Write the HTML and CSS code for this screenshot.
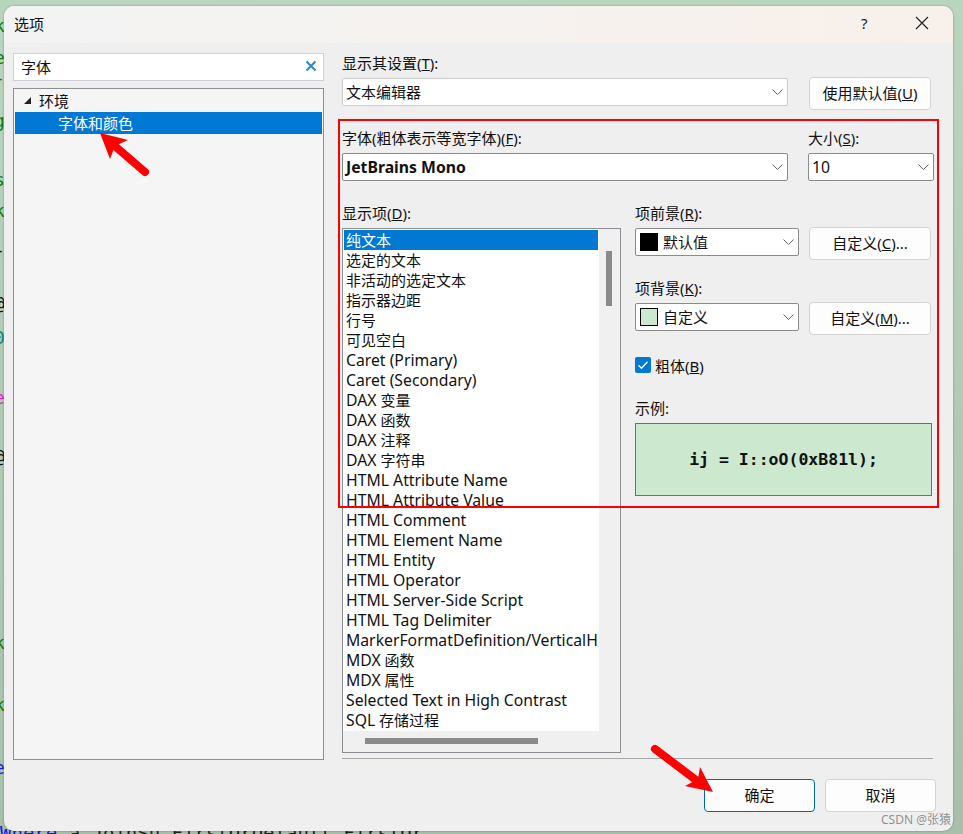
FILE: index.html
```html
<!DOCTYPE html>
<html lang="zh-CN">
<head>
    <meta charset="UTF-8">
    <title>选项</title>
    <link rel="stylesheet" href="styles.css">
</head>
<body>
    <!-- Editor text showing around the dialog -->
    <div class="code-behind">
        <span class="code-frag green" style="top:15px">k</span>
        <span class="code-frag green" style="top:47px">e</span>
        <span class="code-frag green" style="top:67px">-</span>
        <span class="code-frag green" style="top:110px">g</span>
        <span class="code-frag green" style="top:169px">s</span>
        <span class="code-frag green" style="top:200px">k</span>
        <span class="code-frag" style="top:239px">-</span>
        <span class="code-frag" style="top:292px">@</span>
        <span class="code-frag teal" style="top:327px">0</span>
        <span class="code-frag pink" style="top:387px">e</span>
        <span class="code-frag" style="top:445px">@</span>
        <span class="code-frag green" style="top:632px">k</span>
        <span class="code-frag green" style="top:694px">k</span>
        <span class="code-frag blue" style="top:757px">e</span>
        <div class="code-bottom"><span class="blue">Where</span> a.JoinSu.FirstOrDefault.FirstOr</div>
    </div>

    <div class="dialog">
        <div class="titlebar">
            <span class="title">选项</span>
            <span class="help">?</span>
            <svg class="close" width="14" height="14" viewBox="0 0 14 14"><path d="M1 1l12 12M13 1L1 13" stroke="#222" stroke-width="1.2" fill="none"/></svg>
        </div>

        <div class="content">
            <div class="left">
                <div class="search">
                    <span>字体</span>
                    <svg width="12" height="12" viewBox="0 0 12 12"><path d="M1.5 1.5l9 9M10.5 1.5l-9 9" stroke="#2b86cf" stroke-width="2" fill="none"/></svg>
                </div>
                <div class="tree">
                    <div class="tree-row">
                        <svg class="tree-arrow" width="9" height="9" viewBox="0 0 9 9"><path d="M8 1v7H1z" fill="#222"/></svg>
                        <span>环境</span>
                    </div>
                    <div class="tree-row child">字体和颜色</div>
                </div>
            </div>

            <div class="right">
                <div class="label">显示其设置(<u>T</u>):</div>
                <div class="row">
                    <div class="select soft wide">
                        <span>文本编辑器</span>
                        <svg class="chev" width="11" height="6" viewBox="0 0 11 6"><path d="M.5.5l5 5 5-5" stroke="#666" fill="none"/></svg>
                    </div>
                    <div class="btn">使用默认值(<u>U</u>)</div>
                </div>

                <div class="font-row">
                    <div>
                        <div class="label">字体(粗体表示等宽字体)(<u>F</u>):</div>
                        <div class="select wide">
                            <b class="lat">JetBrains Mono</b>
                            <svg class="chev" width="11" height="6" viewBox="0 0 11 6"><path d="M.5.5l5 5 5-5" stroke="#666" fill="none"/></svg>
                        </div>
                    </div>
                    <div>
                        <div class="label">大小(<u>S</u>):</div>
                        <div class="select size">
                            <span class="lat">10</span>
                            <svg class="chev" width="11" height="6" viewBox="0 0 11 6"><path d="M.5.5l5 5 5-5" stroke="#666" fill="none"/></svg>
                        </div>
                    </div>
                </div>

                <div class="items-row">
                    <div class="items-col">
                        <div class="label">显示项(<u>D</u>):</div>
                        <div class="listbox">
                            <div class="list-inner">
                                <div class="item selected">纯文本</div>
                                <div class="item">选定的文本</div>
                                <div class="item">非活动的选定文本</div>
                                <div class="item">指示器边距</div>
                                <div class="item">行号</div>
                                <div class="item">可见空白</div>
                                <div class="item"><span class="lat">Caret (Primary)</span></div>
                                <div class="item"><span class="lat">Caret (Secondary)</span></div>
                                <div class="item"><span class="lat">DAX</span> 变量</div>
                                <div class="item"><span class="lat">DAX</span> 函数</div>
                                <div class="item"><span class="lat">DAX</span> 注释</div>
                                <div class="item"><span class="lat">DAX</span> 字符串</div>
                                <div class="item"><span class="lat">HTML Attribute Name</span></div>
                                <div class="item"><span class="lat">HTML Attribute Value</span></div>
                                <div class="item"><span class="lat">HTML Comment</span></div>
                                <div class="item"><span class="lat">HTML Element Name</span></div>
                                <div class="item"><span class="lat">HTML Entity</span></div>
                                <div class="item"><span class="lat">HTML Operator</span></div>
                                <div class="item"><span class="lat">HTML Server-Side Script</span></div>
                                <div class="item"><span class="lat">HTML Tag Delimiter</span></div>
                                <div class="item"><span class="lat">MarkerFormatDefinition/VerticalHighlight</span></div>
                                <div class="item"><span class="lat">MDX</span> 函数</div>
                                <div class="item"><span class="lat">MDX</span> 属性</div>
                                <div class="item"><span class="lat">Selected Text in High Contrast</span></div>
                                <div class="item"><span class="lat">SQL</span> 存储过程</div>
                            </div>
                            <div class="vthumb"></div>
                            <div class="hthumb"></div>
                        </div>
                    </div>

                    <div class="props-col">
                        <div class="label">项前景(<u>R</u>):</div>
                        <div class="row">
                            <div class="select color">
                                <i class="swatch black"></i><span>默认值</span>
                                <svg class="chev" width="11" height="6" viewBox="0 0 11 6"><path d="M.5.5l5 5 5-5" stroke="#666" fill="none"/></svg>
                            </div>
                            <div class="btn">自定义(<u>C</u>)...</div>
                        </div>
                        <div class="label second">项背景(<u>K</u>):</div>
                        <div class="row">
                            <div class="select color">
                                <i class="swatch green-sw"></i><span>自定义</span>
                                <svg class="chev" width="11" height="6" viewBox="0 0 11 6"><path d="M.5.5l5 5 5-5" stroke="#666" fill="none"/></svg>
                            </div>
                            <div class="btn">自定义(<u>M</u>)...</div>
                        </div>
                        <div class="check-row">
                            <span class="check"><svg width="16" height="16" viewBox="0 0 16 16"><path d="M3.5 8.2l3 3 6-6.4" stroke="#fff" stroke-width="1.4" fill="none"/></svg></span>
                            <span>粗体(<u>B</u>)</span>
                        </div>
                        <div class="label sample-label">示例:</div>
                        <div class="sample">ij = I::oO(0xB81l);</div>
                    </div>
                </div>
            </div>
        </div>

        <div class="footer">
            <div class="footer-btns">
                <div class="btn footer-btn primary">确定</div>
                <div class="btn footer-btn">取消</div>
            </div>
        </div>
    </div>

    <!-- Annotations drawn over the screenshot -->
    <div class="red-box"></div>
    <svg class="marks" width="963" height="834" viewBox="0 0 963 834">
        <path d="M145 172L116 147" stroke="#fe0000" stroke-width="8" stroke-linecap="round"/>
        <path d="M100 133L128 140L115 146L110 159Z" fill="#fe0000"/>
        <path d="M655 749L696 780" stroke="#fe0000" stroke-width="8" stroke-linecap="round"/>
        <path d="M713 792L700 767L698 779L685 786Z" fill="#fe0000"/>
    </svg>
    <div class="watermark">CSDN @张猿</div>
</body>
</html>
```

FILE: styles.css
```css
* {
    margin: 0;
    padding: 0;
    box-sizing: border-box;
}

body {
    width: 963px;
    height: 834px;
    position: relative;
    overflow: hidden;
    padding: 6px 10px 3px 4px;
    background: linear-gradient(180deg, #bad5be 0%, #b4ccb6 40%, #a9bfaa 100%);
    font-family: "Noto Sans", "Noto Sans CJK SC", sans-serif;
    font-size: 15px;
    color: #111;
}

/* Latin runs are a bit wider than the CJK ones */
.lat {
    font-size: 15.75px;
}

/* Editor behind the dialog */
.code-behind {
    position: absolute;
    inset: 0;
    font-family: "DejaVu Sans Mono", monospace;
    font-size: 18px;
}

.code-frag {
    position: absolute;
    left: -6px;
}

.green { color: #0a7d0a; }
.teal { color: #0b8a7a; }
.pink { color: #e020e0; }
.blue { color: #1a1ae0; }

.code-bottom {
    position: absolute;
    left: 0;
    top: 822px;
    white-space: pre;
    color: #222;
    font-size: 19px;
}

/* Dialog */
.dialog {
    position: relative;
    height: 825px;
    background: #efefef;
    border-radius: 10px;
    overflow: hidden;
    box-shadow: 0 0 2px rgba(60, 70, 60, 0.6);
}

.titlebar {
    height: 37px;
    display: flex;
    align-items: center;
    padding: 0 0 3px 10px;
    background: linear-gradient(90deg, #f3f3f3, #f8f0ea);
}

.title {
    flex: 1;
}

.help {
    width: 14px;
    margin-right: 40px;
    font-size: 15px;
    color: #222;
}

.close {
    margin-right: 24px;
}

.content {
    display: flex;
    padding: 10px 0 0 9px;
    gap: 18px;
}

/* Left column */
.left {
    width: 311px;
}

.search {
    height: 28px;
    background: #fff;
    border: 1px solid #cfcfdc;
    display: flex;
    align-items: center;
    justify-content: space-between;
    padding: 0 6px 2px 7px;
}

.tree {
    height: 672px;
    margin-top: 7px;
    background: #f5f5f5;
    border: 1px solid #8d8d94;
    padding: 1px;
}

.tree-row {
    height: 22px;
    display: flex;
    align-items: center;
    padding: 0 0 2px 8px;
}

.tree-arrow {
    margin-right: 7px;
}

.tree-row.child {
    padding-left: 43px;
    background: #0078d4;
    color: #fff;
}

/* Right column */
.right {
    width: 594px;
}

.label {
    height: 24px;
    line-height: 20px;
    white-space: nowrap;
}

.row {
    display: flex;
    align-items: flex-start;
}

.select {
    height: 28px;
    margin-top: 1px;
    background: #fff;
    border: 1px solid #8b8b8b;
    border-radius: 2px;
    display: flex;
    align-items: center;
    padding: 0 0 1px 3px;
    position: relative;
    white-space: nowrap;
}

.select.soft {
    border-color: #cdcdcd;
}

.select.wide {
    width: 446px;
}

.select.size {
    width: 126px;
}

.select.color {
    width: 164px;
    padding-left: 4px;
}

.chev {
    position: absolute;
    right: 4px;
    top: 10px;
}

.btn {
    width: 122px;
    height: 33px;
    margin-left: 21px;
    padding-bottom: 2px;
    background: #fdfdfd;
    border: 1px solid #d3d3d3;
    border-radius: 4px;
    display: flex;
    align-items: center;
    justify-content: center;
    white-space: nowrap;
}

.props-col .btn {
    margin-left: 10px;
}

.font-row {
    display: flex;
    gap: 20px;
    margin-top: 18px;
}

.font-row b {
    font-weight: 700;
}

.items-row {
    display: flex;
    margin-top: 22px;
}

.items-col {
    width: 293px;
}

/* List box */
.listbox {
    position: relative;
    width: 279px;
    height: 525px;
    margin-top: 1px;
    border: 1px solid #8d8d94;
    background: #f0f0f0;
    overflow: hidden;
}

.list-inner {
    width: 256px;
    height: 502px;
    background: #fff;
    padding: 1px;
    overflow: hidden;
}

.item {
    height: 20px;
    line-height: 20px;
    padding-left: 2px;
    white-space: nowrap;
    width: 254px;
    overflow: hidden;
}

.item.selected {
    background: #0078d4;
    color: #fff;
}

.vthumb {
    position: absolute;
    left: 263px;
    top: 22px;
    width: 6px;
    height: 55px;
    background: #8a8a8a;
}

.hthumb {
    position: absolute;
    left: 22px;
    top: 509px;
    width: 173px;
    height: 6px;
    background: #8a8a8a;
}

/* Colour options */
.props-col {
    width: 297px;
}

.second {
    margin-top: 18px;
}

.swatch {
    width: 18px;
    height: 18px;
    margin: 0 5px 0 0;
    border: 1px solid #000;
}

.swatch.black {
    background: #000;
}

.swatch.green-sw {
    background: #cce8cf;
}

.check-row {
    display: flex;
    align-items: center;
    gap: 4px;
    margin-top: 19px;
    height: 22px;
}

.check {
    width: 16px;
    height: 16px;
    background: #0078d4;
    border-radius: 2px;
    display: block;
}

.sample-label {
    margin-top: 22px;
}

.sample {
    height: 73px;
    margin-top: 1px;
    padding-bottom: 1px;
    background: #cce8cf;
    border: 1px solid #6f6f6f;
    display: flex;
    align-items: center;
    justify-content: center;
    font-family: "DejaVu Sans Mono", monospace;
    font-weight: 700;
    font-size: 16.5px;
    color: #111;
}

/* Footer */
.footer {
    position: absolute;
    left: 338px;
    right: 20px;
    top: 752px;
    border-top: 1px solid #a8a8a8;
}

.footer-btns {
    display: flex;
    justify-content: flex-end;
    gap: 10px;
    margin-top: 20px;
    margin-right: -3px;
}

.footer-btn {
    width: 111px;
    margin-left: 0;
}

.footer-btn.primary {
    border: 1px solid #0067c0;
}

/* Annotations */
.red-box {
    position: absolute;
    left: 338px;
    top: 119px;
    width: 601px;
    height: 389px;
    border: 2px solid #fe0000;
}

.marks {
    position: absolute;
    left: 0;
    top: 0;
}

.watermark {
    position: absolute;
    left: 881px;
    top: 810px;
    font-size: 12px;
    color: rgba(110, 110, 110, 0.75);
    white-space: nowrap;
}
```
